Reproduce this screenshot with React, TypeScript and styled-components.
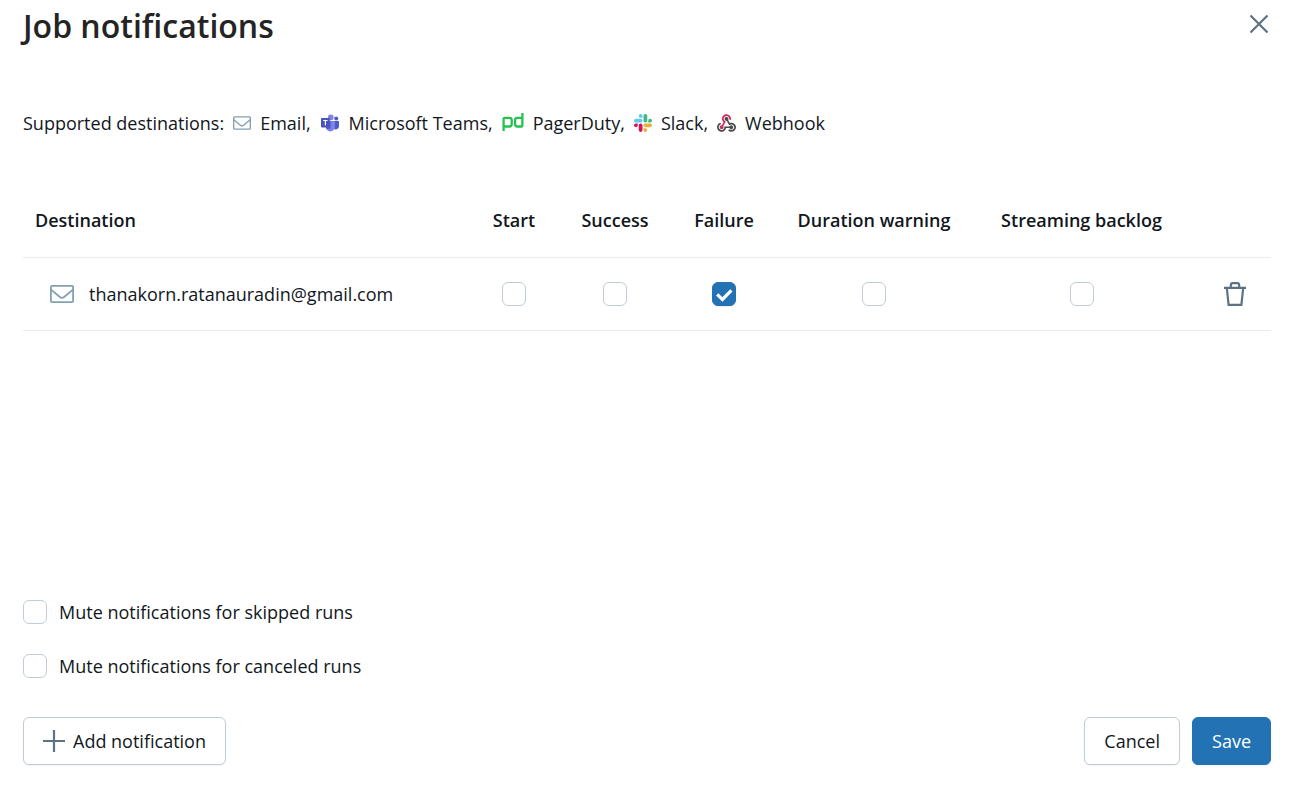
import React, { useState } from "react";
import styled, { createGlobalStyle, css } from "styled-components";

const GlobalStyle = createGlobalStyle`
  *, *::before, *::after { box-sizing: border-box; }
  body {
    margin: 0;
    background: #fff;
    color: #11171c;
    font-family: "Segoe UI", "Open Sans", "Noto Sans", sans-serif;
    font-size: 18px;
    line-height: 28px;
  }
`;

const Dialog = styled.main`
  display: flex;
  flex-direction: column;
  min-height: 100vh;
  padding: 0 24px 31px 23px;
`;

const Header = styled.header`
  display: flex;
  align-items: flex-start;
  justify-content: space-between;
  padding-top: 4px;
`;

const Title = styled.h1`
  margin: 0;
  font-size: 32px;
  line-height: 44px;
  font-weight: 600;
  color: #242424;
`;

const IconButton = styled.button`
  display: inline-flex;
  padding: 8px 0;
  border: 0;
  background: none;
  color: #5f7281;
  cursor: pointer;
`;

const Destinations = styled.div`
  display: flex;
  flex-wrap: wrap;
  align-items: center;
  gap: 9px;
  margin-top: 61px;
`;

const DestinationItem = styled.span`
  display: inline-flex;
  align-items: center;
  gap: 9px;
`;

const TableArea = styled.section`
  flex: 1;
  margin-top: 47px;
`;

const Table = styled.table`
  width: 100%;
  table-layout: fixed;
  border-collapse: collapse;
`;

const Column = styled.col<{ $width?: number }>`
  ${({ $width }) => $width && css`width: ${$width}px;`}
`;

const cell = css<{ $align?: "left" | "right" }>`
  height: 73px;
  padding: 0 12px;
  border-bottom: 1px solid #e8ebed;
  text-align: ${({ $align }) => $align ?? "center"};
  white-space: nowrap;
`;

const HeadCell = styled.th<{ $align?: "left" | "right" }>`
  ${cell}
  font-weight: 600;
`;

const CheckFrame = styled.span`
  position: relative;
  display: block;
  flex: none;
  width: 24px;
  height: 24px;
`;

const Cell = styled.td<{ $align?: "left" | "right" }>`
  ${cell}

  > ${CheckFrame} { margin: 0 auto; }
`;

const Recipient = styled.span`
  display: flex;
  align-items: center;
  gap: 15px;
  padding-left: 15px;
`;

const DeleteButton = styled(IconButton)`
  display: flex;
  margin-left: auto;
  padding: 8px 13px;
`;

const CheckInput = styled.input`
  appearance: none;
  display: block;
  width: 24px;
  height: 24px;
  margin: 0;
  border: 1px solid #c0cdd8;
  border-radius: 6px;
  background: #fff;
  cursor: pointer;

  &:checked {
    border-color: #2272b4;
    background: #2272b4;
    box-shadow: 0 1px 1px rgba(0, 0, 0, 0.08);
  }
`;

const CheckMark = styled.svg`
  position: absolute;
  inset: 0;
  pointer-events: none;
`;

const MuteOptions = styled.div`
  display: flex;
  flex-direction: column;
  gap: 26px;
`;

const MuteLabel = styled.label`
  display: flex;
  align-items: center;
  gap: 12px;
  cursor: pointer;
`;

const Footer = styled.footer`
  display: flex;
  justify-content: space-between;
  margin-top: 37px;
`;

const Actions = styled.div`
  display: flex;
  gap: 12px;
`;

const Button = styled.button<{ $primary?: boolean }>`
  display: inline-flex;
  align-items: center;
  justify-content: center;
  gap: 8px;
  height: 48px;
  padding: 0 19px;
  border: 1px solid ${({ $primary }) => ($primary ? "#2272b4" : "#c0cdd8")};
  border-radius: 6px;
  background: ${({ $primary }) => ($primary ? "#2272b4" : "#fff")};
  box-shadow: 0 1px 1px rgba(0, 0, 0, 0.05);
  color: ${({ $primary }) => ($primary ? "#fff" : "#11171c")};
  font: inherit;
  cursor: pointer;

  svg { color: #5f7281; }
`;

const MailIcon = ({ width, height }: { width: number; height: number }) => (
  <svg width={width} height={height} viewBox="0 0 24 18" fill="none" stroke="#83a0b0" strokeWidth="1.8" aria-hidden="true">
    <rect x="0.9" y="0.9" width="22.2" height="16.2" rx="1.2" />
    <path d="M1 4.6l8.9 7.4c1.3 1.1 2.9 1.1 4.2 0L23 4.6" />
  </svg>
);

const TeamsIcon = () => (
  <svg width="20" height="18" viewBox="0 0 20 18" aria-hidden="true">
    <circle cx="16.2" cy="4.4" r="2" fill="#5059c9" />
    <path d="M13 7h5.2c.5 0 .8.3.8.8v4.4a3.3 3.3 0 0 1-6 1.8z" fill="#5059c9" />
    <circle cx="10.8" cy="3.4" r="2.8" fill="#7b83eb" />
    <path d="M6 7h8.2c.5 0 .8.3.8.8v5a4.6 4.6 0 0 1-9.2 0z" fill="#7b83eb" />
    <path d="M6 7h4.7v7c0 .5-.4.9-.9.9H6.4a5 5 0 0 1-.4-2z" fill="#5b62c9" />
    <rect x="1" y="4" width="8.8" height="9.4" rx="0.8" fill="#4b53bc" />
    <path d="M3.2 6.5h4.4M5.4 6.5v4.8" stroke="#fff" strokeWidth="1.2" />
  </svg>
);

const PagerDutyIcon = () => (
  <svg width="22" height="20" viewBox="0 0 22 20" fill="none" stroke="#25c151" strokeWidth="2.3" aria-hidden="true">
    <path d="M1.6 18V6c0-.7.4-1.1 1.1-1.1h4.8c1.3 0 2.2.9 2.2 2.2v4.2c0 1.3-.9 2.2-2.2 2.2H1.6" />
    <path d="M20.4 0v12.4c0 .7-.4 1.1-1.1 1.1h-4c-1.3 0-2.2-.9-2.2-2.2V7.1c0-1.3.9-2.2 2.2-2.2h5.1" />
  </svg>
);

const SlackIcon = () => (
  <svg width="18" height="18" viewBox="0 0 122.8 122.8" aria-hidden="true">
    <path fill="#d5135a" d="M25.8 77.6c0 7.1-5.8 12.9-12.9 12.9S0 84.7 0 77.6s5.8-12.9 12.9-12.9h12.9v12.9zm6.5 0c0-7.1 5.8-12.9 12.9-12.9s12.9 5.8 12.9 12.9v32.3c0 7.1-5.8 12.9-12.9 12.9s-12.9-5.8-12.9-12.9V77.6z" />
    <path fill="#5fcaf5" d="M45.2 25.8c-7.1 0-12.9-5.8-12.9-12.9S38.1 0 45.2 0s12.9 5.8 12.9 12.9v12.9H45.2zm0 6.5c7.1 0 12.9 5.8 12.9 12.9s-5.8 12.9-12.9 12.9H12.9C5.8 58.1 0 52.3 0 45.2s5.8-12.9 12.9-12.9h32.3z" />
    <path fill="#41ba84" d="M97 45.2c0-7.1 5.8-12.9 12.9-12.9s12.9 5.8 12.9 12.9-5.8 12.9-12.9 12.9H97V45.2zm-6.5 0c0 7.1-5.8 12.9-12.9 12.9s-12.9-5.8-12.9-12.9V12.9C64.7 5.8 70.5 0 77.6 0s12.9 5.8 12.9 12.9v32.3z" />
    <path fill="#e8b03a" d="M77.6 97c7.1 0 12.9 5.8 12.9 12.9s-5.8 12.9-12.9 12.9-12.9-5.8-12.9-12.9V97h12.9zm0-6.5c-7.1 0-12.9-5.8-12.9-12.9s5.8-12.9 12.9-12.9h32.3c7.1 0 12.9 5.8 12.9 12.9s-5.8 12.9-12.9 12.9H77.6z" />
  </svg>
);

const WebhookIcon = () => (
  <svg width="19" height="18" viewBox="0 0 256 239" aria-hidden="true">
    <path fill="#d0295c" d="M119.54 100.503c-10.61 17.836-20.775 35.108-31.152 52.25-2.665 4.401-3.984 7.986-1.855 13.58 5.878 15.454-2.414 30.493-17.998 34.575-14.697 3.851-29.016-5.808-31.932-21.543-2.584-13.927 8.224-27.58 23.58-29.757 1.286-.184 2.6-.205 4.762-.367l23.358-39.168C73.612 95.465 64.868 78.39 66.803 57.23c1.368-14.957 7.25-27.883 18-38.477 20.59-20.288 52.002-23.573 76.246-8.001 23.284 14.958 33.948 44.094 24.858 69.031-6.854-1.858-13.756-3.732-21.343-5.79 2.854-13.865.743-26.315-8.608-36.981-6.178-7.042-14.106-10.733-23.12-12.093-18.072-2.73-35.815 8.88-41.08 26.618-5.976 20.132 3.069 36.575 27.784 48.967z" />
    <path fill="#4b4b4b" d="M149.841 79.41c7.475 13.187 15.065 26.573 22.587 39.836 38.02-11.763 66.686 9.284 76.97 31.817 12.422 27.219 3.93 59.457-20.465 76.25-25.04 17.238-56.707 14.293-78.892-7.851 5.654-4.733 11.336-9.487 17.407-14.566 21.912 14.192 41.077 13.524 55.305-3.282 12.133-14.337 11.87-35.714-.615-49.75-14.408-16.197-33.707-16.691-57.035-1.143-9.677-17.168-19.522-34.199-28.893-51.491-3.16-5.828-6.648-9.21-13.77-10.443-11.893-2.062-19.571-12.275-20.032-23.717-.453-11.316 6.214-21.545 16.634-25.53 10.322-3.949 22.435-.762 29.378 8.014 5.674 7.17 7.477 15.24 4.491 24.083-.83 2.466-1.905 4.852-3.07 7.774z" />
    <path fill="#4a4a4a" d="M167.707 187.21h-45.77c-4.387 18.044-13.863 32.612-30.19 41.876-12.693 7.2-26.373 9.641-40.933 7.29-26.808-4.323-48.728-28.456-50.658-55.63-2.184-30.784 18.975-58.147 47.178-64.293 1.947 7.071 3.915 14.21 5.862 21.264-25.876 13.202-34.832 29.836-27.59 50.636 6.375 18.304 24.484 28.337 44.147 24.457 20.08-3.962 30.204-20.65 28.968-47.432 19.036 0 38.088-.197 57.126.097 7.434.117 13.173-.654 18.773-7.208 9.22-10.784 26.191-9.811 36.121.374 10.148 10.409 9.662 27.157-1.077 37.127-10.361 9.62-26.73 9.106-36.424-1.26-1.992-2.136-3.562-4.673-5.533-7.298z" />
  </svg>
);

const CloseIcon = () => (
  <svg width="24" height="24" viewBox="0 0 24 24" fill="none" stroke="currentColor" strokeWidth="2.2" aria-hidden="true">
    <path d="M3.5 3.5l17 17M20.5 3.5l-17 17" />
  </svg>
);

const PlusIcon = () => (
  <svg width="22" height="22" viewBox="0 0 22 22" fill="none" stroke="currentColor" strokeWidth="2.2" aria-hidden="true">
    <path d="M11 0v22M0 11h22" />
  </svg>
);

const TrashIcon = () => (
  <svg width="22" height="24" viewBox="0 0 22 24" fill="none" stroke="currentColor" strokeWidth="2.2" aria-hidden="true">
    <path d="M0 5.8h22M6.8 5.8V3.2c0-1.2.9-2.1 2.1-2.1h4.2c1.2 0 2.1.9 2.1 2.1v2.6M2.8 5.8l1.8 17.1h12.8l1.8-17.1" />
  </svg>
);

const Checkbox = (props: React.InputHTMLAttributes<HTMLInputElement>) => {
  const [checked, setChecked] = useState(Boolean(props.defaultChecked));
  return (
    <CheckFrame>
      <CheckInput {...props} type="checkbox" onChange={(e) => setChecked(e.target.checked)} />
      {checked && (
        <CheckMark width="24" height="24" viewBox="0 0 24 24" fill="none" stroke="#fff" strokeWidth="3.2" aria-hidden="true">
          <path d="M5.2 12.4l5.2 5L19.4 8.4" />
        </CheckMark>
      )}
    </CheckFrame>
  );
};

const destinations = [
  { name: "Email", icon: <MailIcon width={18} height={14} /> },
  { name: "Microsoft Teams", icon: <TeamsIcon /> },
  { name: "PagerDuty", icon: <PagerDutyIcon /> },
  { name: "Slack", icon: <SlackIcon /> },
  { name: "Webhook", icon: <WebhookIcon /> },
];

const events = [
  { name: "Start", width: 88 },
  { name: "Success", width: 114 },
  { name: "Failure", width: 104 },
  { name: "Duration warning", width: 196 },
  { name: "Streaming backlog", width: 219 },
];

const recipients = [{ email: "thanakorn.ratanauradin@gmail.com", enabled: ["Failure"] }];

export default function App() {
  return (
    <>
      <GlobalStyle />
      <Dialog>
        <Header>
          <Title>Job notifications</Title>
          <IconButton type="button" aria-label="Close"><CloseIcon /></IconButton>
        </Header>

        <Destinations>
          <span>Supported destinations:</span>
          {destinations.map(({ name, icon }, i) => (
            <DestinationItem key={name}>
              {icon}
              <span>{i < destinations.length - 1 ? `${name},` : name}</span>
            </DestinationItem>
          ))}
        </Destinations>

        <TableArea>
          <Table>
            <colgroup>
              <Column />
              {events.map((e) => <Column key={e.name} $width={e.width} />)}
              <Column $width={80} />
            </colgroup>
            <thead>
              <tr>
                <HeadCell scope="col" $align="left">Destination</HeadCell>
                {events.map((e) => <HeadCell key={e.name} scope="col">{e.name}</HeadCell>)}
                <HeadCell as="td" />
              </tr>
            </thead>
            <tbody>
              {recipients.map(({ email, enabled }) => (
                <tr key={email}>
                  <Cell $align="left">
                    <Recipient>
                      <MailIcon width={24} height={18} />
                      {email}
                    </Recipient>
                  </Cell>
                  {events.map((e) => (
                    <Cell key={e.name}>
                      <Checkbox aria-label={`${e.name}: ${email}`} defaultChecked={enabled.includes(e.name)} />
                    </Cell>
                  ))}
                  <Cell $align="right">
                    <DeleteButton type="button" aria-label={`Remove ${email}`}><TrashIcon /></DeleteButton>
                  </Cell>
                </tr>
              ))}
            </tbody>
          </Table>
        </TableArea>

        <MuteOptions>
          <MuteLabel htmlFor="mute-skipped"><Checkbox id="mute-skipped" />Mute notifications for skipped runs</MuteLabel>
          <MuteLabel htmlFor="mute-canceled"><Checkbox id="mute-canceled" />Mute notifications for canceled runs</MuteLabel>
        </MuteOptions>

        <Footer>
          <Button type="button"><PlusIcon />Add notification</Button>
          <Actions>
            <Button type="button">Cancel</Button>
            <Button type="button" $primary>Save</Button>
          </Actions>
        </Footer>
      </Dialog>
    </>
  );
}
